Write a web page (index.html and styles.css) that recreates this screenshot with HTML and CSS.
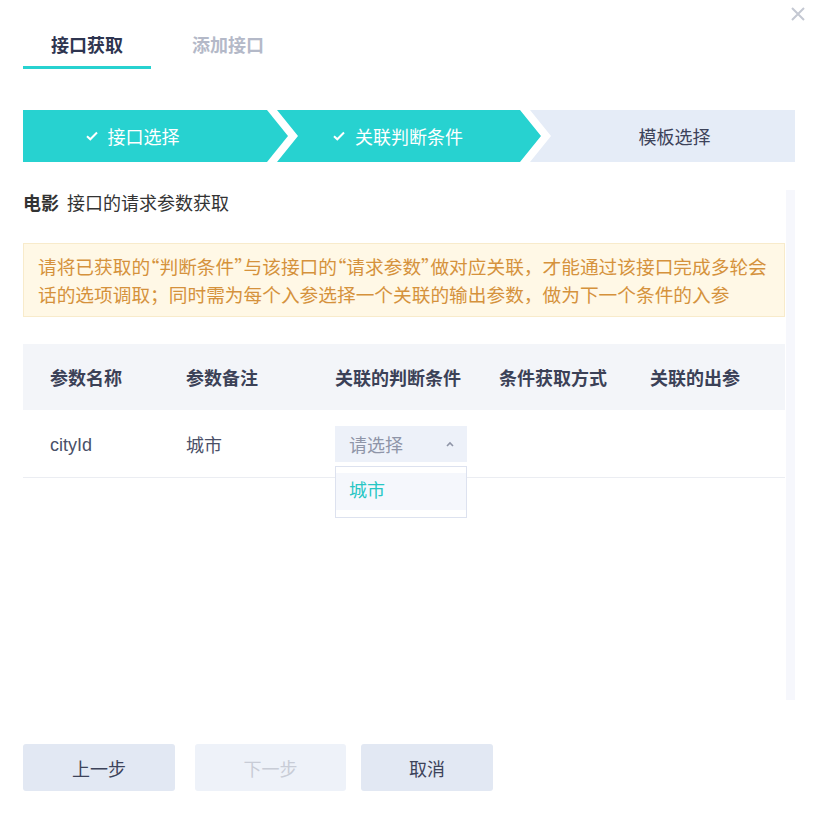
FILE: index.html
```html
<!DOCTYPE html>
<html lang="zh-CN">
<head>
  <meta charset="UTF-8">
  <title>接口获取</title>
  <link rel="stylesheet" href="styles.css">
</head>
<body>
<div class="dialog">
  <div class="topbar">
    <svg class="close" width="14" height="14" viewBox="0 0 14 14"><path d="M1 1L13 13M13 1L1 13" stroke="#c4c8d2" stroke-width="2" fill="none"/></svg>
  </div>

  <ul class="tabs">
    <li class="tab active">接口获取</li>
    <li class="tab">添加接口</li>
  </ul>

  <div class="steps">
    <div class="step step-1 done">
      <svg class="check" width="12" height="10" viewBox="0 0 12 10"><path d="M1 5.2L4.3 8.3L11 1.5" stroke="#fff" stroke-width="2" fill="none"/></svg>
      <span>接口选择</span>
    </div>
    <div class="step step-2 done">
      <svg class="check" width="12" height="10" viewBox="0 0 12 10"><path d="M1 5.2L4.3 8.3L11 1.5" stroke="#fff" stroke-width="2" fill="none"/></svg>
      <span>关联判断条件</span>
    </div>
    <div class="step step-3">
      <span>模板选择</span>
    </div>
  </div>

  <div class="scroll">
    <div class="content">
      <h3 class="title"><b>电影</b><span>接口的请求参数获取</span></h3>

      <div class="notice">
        请将已获取的<span class="term">“判断条件”</span>与该接口的<span class="term">“请求参数”</span>做对应关联，才能通过该接口完成多轮会<br>话的选项调取；同时需为每个入参选择一个关联的输出参数，做为下一个条件的入参
      </div>

      <div class="table">
        <div class="row head">
          <div>参数名称</div>
          <div>参数备注</div>
          <div>关联的判断条件</div>
          <div>条件获取方式</div>
          <div>关联的出参</div>
        </div>
        <div class="row">
          <div class="latin">cityId</div>
          <div>城市</div>
          <div>
            <div class="select">
              <span>请选择</span>
              <svg width="10" height="6" viewBox="0 0 10 6"><path d="M2 5L5 2L8 5" stroke="#8f95a7" stroke-width="1.6" fill="none"/></svg>
              <ul class="dropdown">
                <li class="option">城市</li>
              </ul>
            </div>
          </div>
          <div></div>
          <div></div>
        </div>
      </div>
    </div>
    <div class="scrollbar"></div>
  </div>

  <div class="buttons">
    <button class="btn prev">上一步</button>
    <button class="btn next" disabled>下一步</button>
    <button class="btn cancel">取消</button>
  </div>
</div>
</body>
</html>
```

FILE: styles.css
```css
body {
    margin: 0;
    font-family: 'Liberation Sans', 'Noto Sans CJK SC', sans-serif;
    background: #fff;
    color: #3b4157;
}

.dialog {
    width: 813px;
    padding: 0 18px 0 23px;
    box-sizing: border-box;
}

.topbar {
    display: flex;
    justify-content: flex-end;
    padding-top: 7px;
    margin-right: -10px;
    height: 13px;
}

.close {
    display: block;
}

.tabs {
    list-style: none;
    margin: 0;
    padding: 0;
    display: flex;
    gap: 13px;
}

.tab {
    padding: 14px 28px 8px;
    font-size: 18px;
    line-height: 24px;
    font-weight: bold;
    color: #b4b9c8;
    border-bottom: 3px solid transparent;
}

.tab.active {
    color: #2e3550;
    border-bottom-color: #27d2d0;
}

.steps {
    display: flex;
    margin-top: 41px;
    height: 52px;
}

.step {
    display: flex;
    align-items: center;
    justify-content: center;
    gap: 10px;
    font-size: 18px;
    color: #3d435a;
    background: #e5ecf7;
    box-sizing: border-box;
}

.step.done {
    background: #27d2d0;
    color: #fff;
}

.step-1 {
    width: 265px;
    padding-right: 46px;
    clip-path: polygon(0 0, calc(100% - 21px) 0, 100% 50%, calc(100% - 21px) 100%, 0 100%);
}

.step-2 {
    width: 264px;
    margin-left: -11px;
    padding-right: 22px;
    clip-path: polygon(0 0, calc(100% - 21px) 0, 100% 50%, calc(100% - 21px) 100%, 0 100%, 21px 50%);
}

.step-3 {
    flex: 1;
    margin-left: -11px;
    padding-left: 24px;
    clip-path: polygon(0 0, 100% 0, 100% 100%, 0 100%, 21px 50%);
}

.check {
    display: block;
}

.scroll {
    display: flex;
    margin-top: 28px;
    height: 510px;
}

.content {
    flex: 1;
    min-width: 0;
}

.scrollbar {
    width: 9px;
    margin-left: 1px;
    background: #f6f7fc;
}

.title {
    margin: 0;
    font-size: 18px;
    line-height: 28px;
    font-weight: normal;
    color: #333;
}

.title b {
    margin-right: 8px;
    font-weight: 600;
}

.notice {
    margin-top: 25px;
    padding: 8px 14px 8px;
    background: #fff8e6;
    border: 1px solid #f8ebcb;
    color: #d5923c;
    font-family: 'Noto Sans CJK SC', sans-serif;
    font-size: 18.7px;
    line-height: 28px;
    white-space: nowrap;
    overflow: hidden;
}

.term {
    font-feature-settings: "halt";
}

.table {
    margin-top: 27px;
}

.row {
    display: grid;
    grid-template-columns: 136px 149px 164px 151px 1fr;
    padding-left: 27px;
    align-items: center;
    font-size: 18px;
    height: 67px;
    border-bottom: 1px solid #ebedf2;
    color: #4a5068;
}

.row.head {
    height: 66px;
    border-bottom: 0;
    background: #f3f5f9;
    font-weight: bold;
    color: #3b4157;
}

.latin {
    padding-top: 3px;
}

.select {
    position: relative;
    width: 132px;
    height: 36px;
    box-sizing: border-box;
    padding: 0 12px 0 14px;
    display: flex;
    align-items: center;
    justify-content: space-between;
    background: #edf1f9;
    color: #8f95a8;
}

.dropdown {
    position: absolute;
    top: 40px;
    left: 0;
    width: 132px;
    box-sizing: border-box;
    margin: 0;
    padding: 6px 0 7px;
    list-style: none;
    background: #fff;
    border: 1px solid #dde2ef;
}

.option {
    padding: 0 13px;
    line-height: 37px;
    background: #f5f7fc;
    color: #27c6c4;
}

.buttons {
    display: flex;
    margin-top: 44px;
}

.btn {
    height: 47px;
    border: 0;
    border-radius: 3px;
    font-family: inherit;
    font-size: 18px;
    background: #e2e8f3;
    color: #3d435a;
}

.prev {
    width: 152px;
}

.next {
    width: 151px;
    margin-left: 20px;
    background: #eef2f9;
    color: #c8ccd6;
}

.cancel {
    width: 132px;
    margin-left: 15px;
}
```
